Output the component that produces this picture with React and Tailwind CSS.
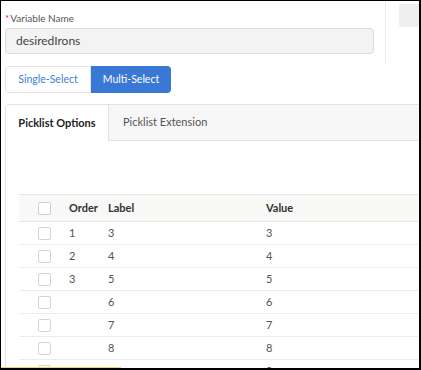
export default function App() {
  const rows = [
    { order: "1", label: "3", value: "3" },
    { order: "2", label: "4", value: "4" },
    { order: "3", label: "5", value: "5" },
    { order: "", label: "6", value: "6" },
    { order: "", label: "7", value: "7" },
    { order: "", label: "8", value: "8" },
    { order: "", label: "9", value: "9" },
  ];

  return (
    <div
      className="relative w-[421px] h-[370px] overflow-hidden bg-white border-l border-t border-r-2 border-b-2 border-black text-[#3e3e3e]"
      style={{ fontFamily: 'Lato, "Noto Sans", sans-serif' }}
    >
      {/* Top form area */}
      <div className="flex h-[62px]">
        <div className="w-[369px] ml-[4px] pt-[10px]">
          <div className="text-[10px] leading-[14px] text-[#555] flex">
            <span className="text-[#c23934] mr-[1px]">*</span>Variable Name
          </div>
          <div className="mt-[3px] h-[26px] rounded-[4px] border border-[#dcdcdc] bg-[#f3f3f3] flex items-center pl-[10px] text-[12px] text-[#444]">
            desiredIrons
          </div>
        </div>
        <div className="ml-[11px] w-px bg-[#ececec]" />
        <div className="ml-[13px] mt-[3px] w-[20px] h-[23px] bg-[#efefef] rounded-l-[3px]" />
      </div>

      {/* Select type buttons */}
      <div className="ml-[4px] mt-[3px] flex h-[27px] text-[10.5px]">
        <div className="w-[86px] flex items-center justify-center border border-[#e3e3e3] rounded-l-[4px] text-[#3b82d6] bg-white">
          Single-Select
        </div>
        <div className="w-[80px] flex items-center justify-center rounded-r-[4px] bg-[#3a78d6] text-white">
          Multi-Select
        </div>
      </div>

      {/* Tabs panel */}
      <div className="ml-[4px] mt-[11px] w-[440px] border-l border-t border-[#e2e2e2] rounded-tl-[4px]">
        <div className="flex h-[36px] text-[11px]">
          <div className="w-[102px] flex items-center justify-center font-bold text-[#222] bg-white">
            Picklist Options
          </div>
          <div className="flex-1 flex items-center pl-[14px] bg-[#f7f7f7] border-l border-b border-[#e2e2e2] text-[#555]">
            Picklist Extension
          </div>
        </div>

        <div className="pl-[13px] pt-[53px]">
          <div className="border-t border-[#e6e6e6]">
            <div className="flex items-center h-[27px] bg-[#f8f8f7] border-b border-[#e6e6e6] text-[11px] font-bold text-[#333]">
              <div className="w-[50px] flex justify-center">
                <div className="w-[13px] h-[13px] border border-[#cfcfcf] rounded-[2px] bg-white" />
              </div>
              <div className="w-[39px]">Order</div>
              <div className="w-[158px]">Label</div>
              <div>Value</div>
            </div>
            {rows.map((r, i) => (
              <div
                key={i}
                className="flex items-center h-[23px] border-b border-[#ececec] text-[11px] text-[#555]"
              >
                <div className="w-[50px] flex justify-center">
                  <div className="w-[13px] h-[13px] border border-[#d4d4d4] rounded-[2px] bg-white" />
                </div>
                <div className="w-[39px]">{r.order}</div>
                <div className="w-[158px]">{r.label}</div>
                <div>{r.value}</div>
              </div>
            ))}
          </div>
        </div>
      </div>

      <div className="absolute left-0 bottom-0 w-[120px] h-px bg-[#e6d27a]" />
    </div>
  );
}
